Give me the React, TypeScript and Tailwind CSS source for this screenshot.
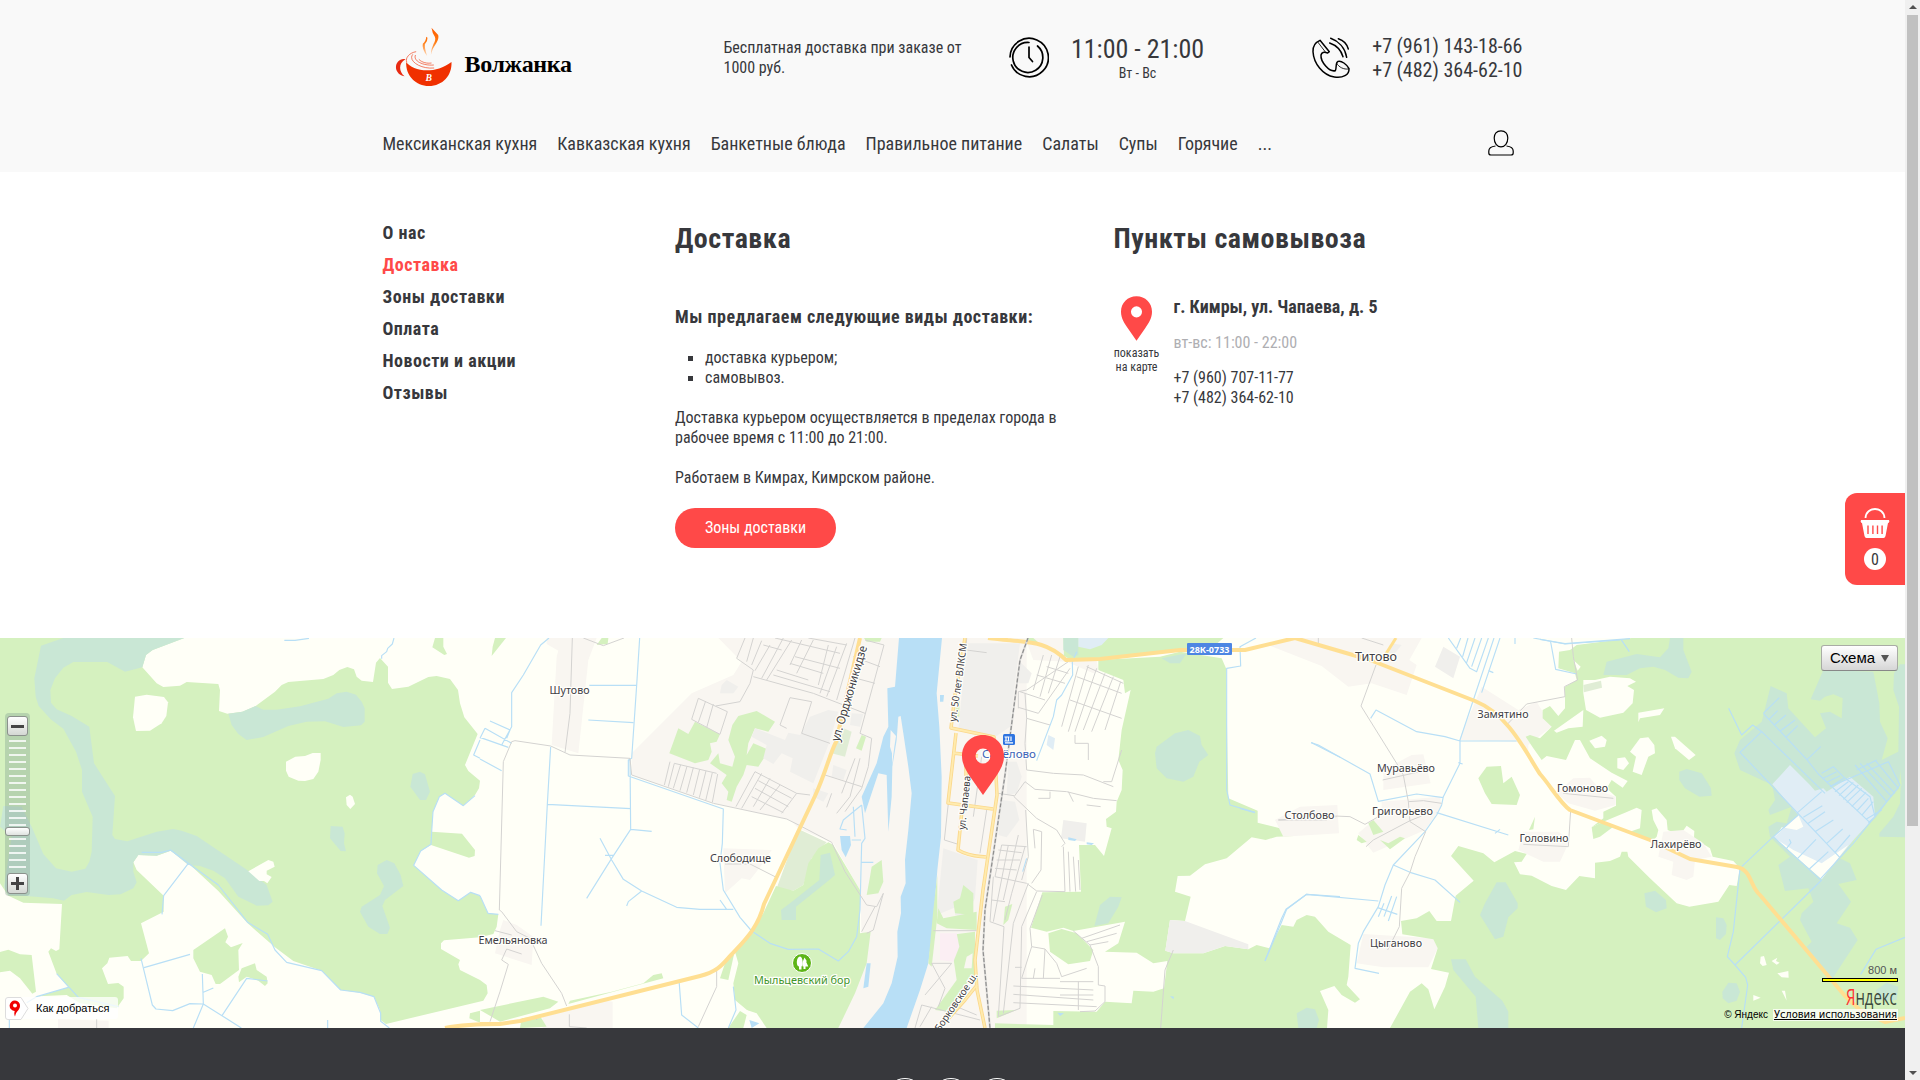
import React from 'react';

const GREEN = '#d5f1bf';
const FIELD = '#fffff7';
const SWAMP = '#c9e7d5';
const WATER = '#b8dff6';
const TOWN = '#f9f6f1';
const GREY = '#f0efec';
const PARK = '#e0edd5';
const PEAT = '#e0edf5';

type Shape = [string, string];
type Tile = { x: number; fills: Shape[]; streets?: string; canals?: string };

/* Map tiles: each has its own origin and is drawn at a third of its unit size. */
const tiles: Tile[] = [
  {
    x: 0,
    fills: [
      [GREEN, '0,24 553,24 458,60 438,75 427,112 470,160 490,171 540,167 560,156 655,162 660,180 657,243 682,251 727,245 767,228 825,185 845,165 865,156 970,147 1000,135 1018,120 1042,111 1062,118 1070,140 1085,152 1119,156 1128,98 1140,84 1164,110 1164,158 1176,177 1225,170 1285,141 1310,138 1350,147 1374,180 1380,220 1393,262 1433,312 1395,405 1405,423 1440,452 1437,475 1425,495 1390,527 1335,490 1318,500 1299,545 1295,605 1386,611 1425,660 1424,678 1407,683 1293,645 1262,663 1241,706 1325,780 1375,812 1412,787 1440,797 1464,850 1495,853 1490,890 1480,912 1440,922 1332,931 1323,940 1323,957 1380,990 1375,1003 1380,1020 1440,1050 1460,1065 1463,1090 1450,1112 1158,1182 1142,1170 1140,1140 1122,1100 1080,1088 1022,1080 965,1022 880,993 825,952 743,880 655,783 565,700 512,662 470,677 415,675 400,697 410,720 491,797 491,845 423,880 447,970 423,993 393,993 383,978 328,983 322,1000 306,1015 324,1062 355,1059 371,1070 371,1105 350,1135 240,1120 200,1095 115,1099 205,1072 170,1031 145,965 153,955 168,963 178,958 186,822 70,818 25,797 0,760'],
      [GREEN, '0,966 25,959 60,973 95,975 108,1085 97,1091 60,1045 30,1022 0,1027'],
      [GREEN, '580,960 675,895 684,920 676,937 693,952 728,939 715,960 717,1020 660,1062 647,1062 635,1035 600,1025 580,985'],
      [GREEN, '715,1040 725,1015 765,1000 770,1020 800,1040 803,1060 795,1068 775,1052 740,1040 717,1057'],
      [GREEN, '1305,24 1330,24 1330,50 1341,72 1333,75 1297,52'],
      [GREEN, '1410,1150 1440,1142 1440,1178 1408,1165'],
      [TOWN, '174,1168 326,1172 326,1194 174,1194'],
      [SWAMP, '190,24 553,24 458,60 438,75 427,112 375,125 322,96 220,96 190,113 165,145 151,180 153,218 170,238 215,258 268,290 282,400 345,498 337,615 345,627 382,634 470,605 520,597 545,602 590,618 745,722 800,765 818,815 805,826 770,827 715,800 675,745 640,722 600,708 565,705 512,662 470,677 415,675 400,697 400,725 410,757 400,775 362,793 325,795 260,786 215,795 192,812 160,805 80,798 25,795 12,770 35,620 0,590 10,528 65,530 95,590 130,672 168,715 215,725 256,716 268,695 275,665 278,560 246,485 246,420 228,365 190,296 152,268 116,228 107,200 103,145 123,47'],
      [SWAMP, '685,251 727,245 767,228 790,239 830,239 900,229 985,206 1010,190 1040,185 1068,194 1085,215 1094,235 1094,275 1083,286 1030,291 975,274 920,275 865,288 790,321 740,330 715,312 695,285'],
      [SWAMP, '1238,432 1260,425 1275,433 1290,485 1278,510 1260,510 1231,470'],
      [SWAMP, '992,588 1028,590 1034,610 1032,640 1038,664 1022,663 990,625'],
      [SWAMP, '1133,705 1160,690 1183,700 1202,735 1210,768 1155,810 1147,828 1170,893 1162,912 1140,912 1105,890 1080,845 1085,830 1140,795 1152,768 1131,730'],
      [FIELD, '405,200 440,194 492,201 504,217 499,258 485,280 450,302 408,303 399,262'],
      [FIELD, '858,395 886,380 915,378 938,369 962,369 962,390 955,425 940,447 915,453 895,452 866,440 858,422'],
      [FIELD, '1038,502 1050,494 1058,500 1065,522 1051,537 1040,525'],
      [FIELD, '745,724 805,690 820,695 824,710 800,722 800,733 815,741 802,760 792,753 778,753'],
    ],
    canals: 'M425,667H485L512,660 565,700 655,765 743,877 803,913 825,960 860,997 965,1022 1022,1080 1080,1087 1122,1100 1142,1150 1142,1174 1168,1194M565,700L491,797 486,853M423,985L457,1125 468,1137 518,1142 570,1121 610,1122 666,1157 740,1045 803,1053M432,1013L570,973M607,1032L610,1122 580,1194M610,1087L640,1074M666,1157L724,1194M170,1031L235,1102 355,1130M205,1072L110,1100 80,1118M853,31H885L927,25M1182,24L1177,42 1163,55 1160,65 1145,77V86M1440,330L1421,375 1440,385M1440,797L1412,787 1375,812 1325,780 1241,706 1262,663 1293,643 1295,605 1299,545 1318,500 1335,490 1390,527 1425,497M983,1170V1194M28,1170V1194',
    streets: 'M290,1168V1194',
  },
  {
    x: 480,
    fills: [
      [TOWN, '200,24 350,24 325,90 295,370 215,345 230,80 235,62 200,42'],
      [TOWN, '715,24 785,95 760,135 635,190 455,370 455,435 700,520 930,570 955,595 1060,640 1140,780 1145,915 1172,905 1075,1194 1640,1194 1640,24'],
      [TOWN, '730,655 875,660 845,705 810,750 785,745 735,790'],
      [TOWN, '70,870 110,885 160,920 155,1005 45,970 60,900'],
      [TOWN, '188,1160 370,1110 398,1115 398,1194 188,1194'],
      [GREEN, '45,24 78,24 35,78 38,50'],
      [GREEN, '365,24 385,24 383,42 350,45'],
      [GREEN, '595,295 625,312 645,275 720,313 710,335 690,340 695,365 685,390 645,400 568,370'],
      [GREEN, '757,285 775,258 830,243 885,275 865,305 825,295 805,340 800,375 820,340 868,360 835,410 800,405 790,435 770,470 755,515 740,510 745,485 725,460 740,435 690,400 715,370 720,400 757,410 765,380 745,330'],
      [GREY, '825,295 915,330 925,308 960,315 990,260 1045,240 1075,245 1045,345 1000,460 930,425 938,385 905,370 880,402 850,385 860,345 815,320'],
      [GREY, '740,150 775,170 760,190 720,190 725,165'],
      [GREY, '1115,250 1150,252 1140,290 1110,285'],
      [GREY, '1060,405 1100,420 1090,450 1055,440'],
      [GREY, '1000,475 1045,490 1030,515 1000,500'],
      [PARK, '1080,290 1115,305 1095,380 1055,370'],
      [PARK, '955,597 1040,637 995,685 970,765 940,782 890,775'],
      [GREEN, '1045,637 1060,645 1140,780 1140,910 1172,905 1160,1000 1125,1090 1075,1194 745,1194 780,1145 825,1160 765,1110 760,1060 775,1000 765,965 850,850 888,768 940,782 970,765 985,700 1015,655'],
      [FIELD, '745,1194 770,1130 830,1150 860,1194'],
      [GREEN, '745,1194 780,1143 800,1155 790,1194'],
      [GREEN, '735,1000 765,960 745,1050 720,1045'],
      [GREEN, '0,1140 190,1100 235,1115 210,1135 60,1175'],
      [GREEN, '125,1165 180,1158 200,1190 120,1194'],
      [GREEN, '395,1085 490,1060 520,1035 545,1030 550,1045 265,1122 270,1112'],
      [GREEN, '1175,710 1205,690 1210,755 1195,790 1160,795 1170,740'],
      [GREEN, '1145,315 1158,320 1145,362 1128,355'],
      [SWAMP, '1022,675 1050,668 1065,735 1045,752 948,830 948,870 905,870 903,840 930,820 1018,750'],
      [WATER, '1257,24 1386,24 1370,190 1378,290 1385,440 1383,620 1372,720 1358,900 1345,1000 1320,1080 1280,1194 1150,1194 1210,1120 1235,1060 1253,980 1252,905 1263,850 1262,800 1277,760 1275,690 1285,600 1295,490 1285,410 1270,310 1262,258 1255,260 1250,330 1237,410 1235,500 1225,605 1220,435 1195,430 1155,550 1145,500 1190,400 1210,320 1225,290 1222,175 1245,170'],
      [TOWN, '1232,300 1248,318 1243,350 1236,405 1236,370 1230,350'],
      [WATER, '1080,618 1110,618 1113,645 1097,682 1085,660'],
      [WATER, '1160,1000 1172,1000 1165,1070 1150,1075'],
      [WATER, '808,1170 838,1180 815,1194'],
    ],
    canals: 'M207,24L182,45 130,135 95,188V290L65,345M30,273L90,300 80,325M15,295L95,340M0,325L15,295M0,322L85,352M0,387L65,422M479,24L470,166 455,385 445,390V438L730,537 727,640 720,700 730,780 780,862 815,903 870,940 925,958 1015,957 1075,993 1105,965 1130,920 1140,840 1145,640 1155,625 1145,525M328,166H470M325,270L460,278M212,350L202,523 183,887M202,523L452,536M450,385L452,598 515,604M452,598L395,685 320,805M360,625L395,690 430,748 485,783 590,832 660,838H760M375,676H400M485,783L445,815 440,828M720,810L740,838M1145,525L1090,570 1080,597 1100,600M1120,530L1125,620M597,1050L605,1155 655,1194M760,1070L768,1140 745,1194M1115,630H1143M1143,697H1180M0,797L24,850 55,853',
    streets: 'M277,24L270,250 255,368M65,845L58,840 70,395 95,335 105,332 212,348 270,375 450,385 455,435 700,520 920,567 960,587 1055,637 1095,725 1160,825 1190,830 1210,790M65,845L110,905 150,925 185,1000 245,1090 260,1128M45,902L95,915M125,972L80,957 65,990 85,1003 60,1085 30,1175M268,1153V1190L320,1194M310,24L370,47 432,24M795,24L770,85 820,120 810,160 780,215 707,228M655,205L635,268 720,313 742,245ZM677,213L655,277M700,222L680,293M820,24L800,95M845,32L815,105M870,45L825,122M910,24L845,145M935,30L860,150M820,140L1000,190 1155,250M885,24L1080,70M850,45L905,60M945,80L1080,115M930,100L1030,130M890,120L985,150M880,135L1050,185M965,30L930,105M1000,30L950,130M1045,45L1015,165M1070,50L1020,190M1100,40L1040,200M1125,24L1070,210M985,24L1100,45M1155,30L1212,45 1140,310 1175,325 1165,410 1145,475 1095,545M1120,80L1200,110M1110,140L1185,160M930,203L900,285 920,295M930,203L995,215 965,310 1050,340M570,395L553,465M583,400L565,470M710,430L583,400M602,404L580,475M621,409L600,482M640,413L620,488M659,418L640,495M678,423L658,503M697,428L677,512M713,432L697,517M825,425L768,530M845,430L785,535M825,425L950,490 905,550M835,452L935,505M825,475L925,530M815,500L910,548M870,445L820,530M900,465L840,540M950,490L990,495M1035,435L1145,470M1140,385L1110,500 1070,550M1125,385L1085,490M1055,490L1040,532M1210,790L1180,900 1160,910M1185,830L1145,905M735,702H810L885,740M710,1015V1070L655,1190M170,1170V1160',
  },
  {
    x: 860,
    fills: [
      [FIELD, '1085,24 1440,24 1440,1194 900,1194 800,700'],
      [GREEN, '500,24 1090,24 1060,50 720,92 625,90 590,65 500,36'],
      [GREEN, '715,90 900,80 960,65 1085,85 1098,115 1105,505 1193,542 1193,578 1260,595 1280,580 1302,600 1302,618 1250,620 1217,630 1175,622 1100,685 1035,703 990,737 953,738 945,785 992,800 975,873 930,870 916,962 940,970 1030,970 1095,948 1165,958 1190,945 1228,955 1265,885 1300,890 1310,870 1340,855 1365,860 1405,905 1472,945 1465,1040 1460,1065 1500,1108 1485,1118 1445,1095 1423,1068 1380,1083 1405,1140 1401,1194 405,1194 405,1180 580,1185 580,1143 710,1145 735,1115 815,1120 820,1082 880,1085 912,1075 922,993 880,1000 830,968 735,965 775,940 795,875 640,903 610,893 560,905 513,893 547,787 663,785 657,645 705,645 732,678 755,595 740,590 738,567 768,545 770,515 785,480 788,420 775,390 785,300 812,180 795,190 790,150 715,120'],
      [GREY, '930,870 975,873 1165,943 1165,958 1095,948 1030,970 940,970 916,962'],
      [TOWN, '500,36 530,38 590,65 630,88 710,92 715,120 700,130 620,95 520,90'],
      [TOWN, '520,24 610,24 612,75 590,65 540,42'],
      [GREEN, '565,910 605,897 650,910 700,960 690,993 625,1003 570,965'],
      [GREY, '320,40 480,40 465,160 450,290 410,318 295,300'],
      [GREY, '480,95 515,130 505,160 475,160'],
      [GREY, '445,395 470,395 485,440 470,490 440,495'],
      [GREY, '425,510 465,515 478,570 440,622 415,615'],
      [GREY, '610,570 680,580 675,635 603,625'],
      [GREY, '250,655 353,690 345,805 315,865 285,855 290,830 230,855'],
      [GREEN, '310,765 340,790 340,855 285,850 280,815 300,805'],
      [GREEN, '235,835 250,865 350,845 350,900 260,895 230,880'],
      [GREEN, '270,915 345,905 345,1035 310,1070 270,1145 225,1140 290,1050'],
      [TOWN, '320,980 338,970 335,1015 312,1015'],
      ['#fbeef3', '240,910 290,910 298,950 280,995 240,990'],
      [GREEN, '435,830 457,822 445,870 430,885'],
      [GREEN, '12,24 65,24 60,35 20,35'],
      [GREEN, '290,200 299,205 298,260 285,260'],
      [GREEN, '410,1142 470,1140 410,1165'],
      [GREEN, '232,735 232,860 215,1010 205,1000 220,840'],
      [SWAMP, '885,370 890,350 945,310 985,300 1020,318 1025,345 1045,375 1018,395 1000,440 970,455 920,445 890,415'],
      [SWAMP, '703,888 720,825 750,800 785,802 775,830 745,880'],
      [SWAMP, '610,24 655,24 655,75 640,80 610,60'],
      [SWAMP, '1310,1150 1340,1133 1365,1138 1377,1170 1370,1194 1315,1194'],
      [SWAMP, '905,85 980,70 960,100 930,100'],
      [PEAT, '655,24 745,24 725,45 690,58 655,50'],
      [PEAT, '565,315 585,325 580,360 560,345'],
      [WATER, '240,195 252,195 250,215 240,215'],
      [WATER, '625,622 650,628 645,633 625,630'],
      [WATER, '680,637 702,640 695,645 680,643'],
      [WATER, '592,1148 612,1150 600,1158'],
      [WATER, '930,1098 942,1100 940,1108'],
    ],
    canals: 'M650,65L637,95 638,135 605,195 590,210 580,260 530,392M1188,24L1140,50 1142,108 1100,115 1100,480 1110,525 1185,547M1355,338L1440,382M1215,993L1265,875 1280,838 1340,793 1440,800M500,685L488,725',
    streets: 'M550,75L520,180M575,75L540,200M600,80L565,190M625,95L500,180 475,185V235M560,110L625,130M530,135L615,160M480,185L555,210M475,232L535,250 630,115M655,110L605,290M685,105L625,305M710,115L645,305M735,130L670,300M760,140L695,305M782,155L735,300M680,110L790,160M650,140L785,190M630,210L785,265M495,190L500,265 495,340 500,420 580,430 670,435 760,470M500,265L570,285M645,315L645,340H685V390M785,360L755,455 730,455M495,455L525,478 620,485 700,505 770,512M495,455L462,500 530,565 590,600 615,640M462,497L415,490M570,485V505H535M625,485L640,515M680,525L722,530M497,540L505,680 485,750M520,598L545,605 543,720 515,760M520,598L525,655M610,650L615,785M625,665L630,785M640,680L647,785M655,690L660,780M615,785L530,783 500,760 405,740 425,645 500,650M415,660L485,668M410,690H480M405,715L470,720M475,615L430,810M445,645L400,875M495,650L455,790 435,870M400,740L390,875 432,890 415,1160M395,810L435,815M505,760L460,880 430,1150M530,785L485,890 480,1135 415,1160M547,795L510,895 515,950 485,1045H600M515,950L555,957 550,1045M555,957L590,1000 605,1040 680,1015M525,1015L520,1045M465,1012H485M460,1068L700,1080M600,1055H700M600,1095H700M460,1093L700,1110M460,1118L710,1130M655,1055V1140M665,925L780,885M680,935L770,910M690,945L745,935M640,903L690,945 715,1010V1065L735,1068V1115L705,1143 660,1145M940,960L915,1020 902,1194M265,520L253,630 295,643M365,380L340,560M380,540L360,670M320,24L318,60 380,68M220,902H350M215,1000H275L195,1095M215,1000L255,1075 235,1130M185,1125L360,1170M215,1130L180,1190M290,1130L350,1155M185,1125L165,1194M615,640L605,650M1255,570H1400',
  },
  {
    x: 1240,
    fills: [
      [TOWN, '85,45 150,24 545,24 508,90 530,105 500,195 395,160 325,170 245,108'],
      [GREY, '455,40 485,45 460,75 440,65'],
      [GREY, '610,50 660,80 640,145 585,110'],
      [TOWN, '660,330 665,310 725,170 835,240 890,215 935,290 890,325 865,345 865,365 830,335'],
      [TOWN, '430,420 515,375 550,373 572,460 430,480'],
      [TOWN, '355,610 425,550 425,515 600,500 605,530 555,600 400,668'],
      [TOWN, '105,570 180,530 292,525 297,610 130,620'],
      [TOWN, '835,660 850,605 955,605 990,630 960,695 910,695'],
      [TOWN, '950,490 1000,445 1050,443 1085,485 1127,500 1127,525 1065,542 985,520'],
      [TOWN, '350,1000 370,912 580,925 593,955 565,1012 430,1012'],
      [GREEN, '715,445 740,410 783,408 790,460 815,440 840,495 830,525 755,522 735,490'],
      [GREEN, '885,560 880,598 867,600'],
      [GREEN, '400,570 430,605 400,615 385,580'],
      [GREEN, '355,615 380,635 365,640 350,630'],
      [GREEN, '420,630 445,640 480,620 495,625 450,658'],
    ],
    canals: 'M625,24L690,115 710,125 745,24M650,55L662,24M668,80L684,24M680,98L705,24M695,110L725,24M762,24L705,195 660,330V400L610,500 605,525 590,555 555,605 460,705 435,765 415,830 370,905 355,940 345,1015 417,1030M780,24L725,188M392,265L408,240 530,305 615,320 660,333H830M213,338L235,345 390,432 415,514 530,492 610,503M590,548L805,615M765,610L780,598M460,705L510,727 585,750 660,817M415,813L200,793 138,838 125,865 75,992M413,833L472,853M415,860L432,820M432,860L455,798M445,873L470,800M745,122L760,128M655,398L668,402M825,24V42M880,24L975,42 1140,30M932,36L947,118 1010,132M0,535L45,548',
    streets: 'M408,105L363,228 470,400 490,435 505,515 510,575 557,605 525,680 510,727 485,775 478,890 443,960M365,24L430,45M235,40V24M428,450L540,425M505,515L550,512 605,520M285,558L330,560 375,583 415,560M378,650L400,630 510,572 545,558M995,24L1000,80 1013,150 973,170 975,200 860,222 800,285M970,490L1120,505M992,540L985,650 850,643M115,570L290,560',
  },
  {
    x: 1540,
    fills: [
      [GREEN, '-450,1194 -390,1085 -355,1060 -335,1078 -317,1138 -285,1070 -273,1028 -327,1017 -307,955 -320,928 -413,913 -417,873 -370,865 -332,843 -310,873 -267,873 -253,797 -199,752 -267,678 -245,648 -170,670 -137,697 -75,663 -40,672 -55,695 -78,697 -60,733 -25,737 35,768 78,780 118,738 165,745 165,698 210,693 240,680 245,665 262,665 265,680 330,745 410,820 448,830 535,815 568,765 590,768 600,715 580,693 518,680 510,655 462,625 463,603 440,587 420,615 383,600 380,570 350,535 335,540 340,570 355,600 350,620 335,635 265,607 300,595 305,540 290,533 255,548 190,575 155,592 190,565 190,545 228,527 228,500 200,475 215,450 248,473 263,453 215,428 150,385 120,330 105,330 78,390 20,378 5,390 -20,355 -43,320 -30,315 0,325 35,290 8,265 8,240 30,228 55,258 75,235 75,170 110,150 105,130 55,115 57,65 90,60 110,45 275,24 1095,24 1095,1194'],
      [GREEN, '155,592 190,575 220,590 180,620 160,627'],
      [FIELD, '130,150 165,150 210,140 270,145 288,155 262,168 282,180 278,220 250,248 180,263 138,240 130,190'],
      [PARK, '130,165 183,152 186,173 132,187'],
      [FIELD, '295,248 373,235 360,255 300,265 295,277'],
      [FIELD, '42,302 130,240 128,290 85,295 50,308'],
      [FIELD, '148,332 185,317 200,330 195,350 165,355'],
      [FIELD, '270,365 300,325 325,322 343,345 345,370 325,380 305,435 278,425 288,380'],
      [FIELD, '232,385 255,382 267,400 250,420 232,415'],
      [FIELD, '393,320 405,320 467,375 447,390 405,355'],
      [FIELD, '662,980 672,978 680,1005 668,1008 660,1000'],
      [FIELD, '695,993 712,983 708,993 719,998 710,1004'],
      [FIELD, '712,1030 745,1023 746,1043 725,1042'],
      [FIELD, '640,1095 662,1103 640,1112'],
      [FIELD, '725,1082 735,1082 740,1112'],
      [FIELD, '100,90 122,110 113,122'],
      [TOWN, '355,680 370,605 430,600 490,640 515,680 465,690 460,740 440,750 395,735 400,695'],
      [SWAMP, '190,135 200,95 290,72 360,82 385,55 390,24 430,24 430,60 455,125 445,145 415,143 375,120 340,110 300,115 260,135'],
      [SWAMP, '-180,855 -165,820 -130,757 -103,757 -67,820 -67,835 -95,862 -110,920 -135,928'],
      [SWAMP, '-267,988 -223,988 -195,1040 -113,1112 -95,1145 -95,1194 -185,1194 -193,1100 -260,1020'],
      [SWAMP, '418,425 440,417 485,430 513,475 515,497 478,500 435,475 418,450'],
      [SWAMP, '313,790 345,782 378,810 380,835 348,847 318,830'],
      [SWAMP, '528,862 550,865 560,885 558,912 540,930 528,925'],
      [SWAMP, '547,1085 565,1058 590,1060 600,1085 590,1112 565,1120 548,1105'],
      [SWAMP, '692,168 740,190 745,235 825,322 858,295 840,250 870,245 905,265 908,205 880,193 855,200 840,212 812,208 850,120 1000,125 1018,220 1020,275 1043,325 1025,390 1085,360 1075,500 1060,560 1000,570 900,685 930,700 950,750 895,762 933,815 890,880 930,893 953,930 878,1045 850,1030 800,950 815,935 780,870 785,850 820,815 805,775 735,783 715,705 750,680 690,620 685,590 710,575 740,580 755,530 690,555 685,540 705,510 697,465 600,420 583,370 600,330 665,275'],
      [SWAMP, '1095,103 1080,103 1062,130 1060,180 1077,230 1075,370 1085,465 1018,600 1018,620 1095,622'],
      [GREEN, '1043,515 1082,470 1080,520 1060,560 1018,610 950,640 915,680 905,684 945,625 1010,560'],
      [SWAMP, '1008,1080 1040,1058 1075,1070 1070,1110 1010,1112'],
      [PEAT, '750,405 810,465 825,482 850,475 860,485 930,440 1000,500 1005,560 945,625 845,745 700,620 775,555 697,463'],
      [FIELD, '705,620 775,555 790,590 770,600 725,592'],
      [FIELD, '705,625 760,660 845,700 925,645 845,748'],
    ],
    canals: 'M566,235L605,315 638,285 665,305 600,367 900,683 940,640M665,305L855,490M670,250L800,388 835,432 990,578M670,250L718,203M687,268L713,242M703,285L738,255M720,304L765,270M737,322L773,287M802,388L842,350M770,550L845,485M775,555L700,620 605,710M700,620L840,748 900,683M740,655L753,638 748,628M773,685L828,628M808,717L865,665M885,667L930,615M860,640L908,597M825,605L880,570M805,580L855,545M790,562L847,527M845,430L880,410 910,440 990,500 1005,560 985,578M850,445L890,425M860,457L900,437M870,470L912,445M885,485L925,455M897,497L940,457M910,508L955,465M920,518L965,475M935,530L978,487M950,543L985,505M965,556L1000,515M978,568L1025,540M945,405L1040,515 1080,465 1045,395 870,470M960,400L1055,500M980,400L1065,490M1005,390L1075,475M950,420L1010,390M940,640L1040,515M845,750L585,1005M600,715L580,905 562,980 585,1005 617,1042 623,1065 605,1194M1095,922L1008,958 962,1033M243,28L268,65M0,28L75,41 270,26',
  },
];

const roads = [
  'M480,1024H500L520,1021 700,976C720,971 724,962 732,954C745,940 758,928 764,904L815,796C826,772 830,753 836,742L860,638',
  'M988,638C1030,643 1045,640 1066,660L1100,659 1180,650 1245,650 1295,638 1370,660 1475,701C1510,715 1527,755 1540,774C1550,785 1560,803 1570,810L1650,840 1690,859 1737,867C1752,870 1750,887 1760,895L1845,996 1860,1010 1885,1022 1905,1018',
];
const avenues = [
  'M965,638L955,695 951,728 994,737 997,795 983,890 975,960 977,990 985,1028',
  'M956,733L948,803 993,809M953,753L978,756M966,760V780M962,810L958,850C970,857 978,856 986,857M977,985L965,1000 940,1028',
];

type Place = { t: string; x: number; y: number; s?: number; c?: string; r?: number; a?: 'start' | 'middle'; w?: number };
const places: Place[] = [
  { t: 'Шутово', x: 569.5, y: 694, w: 40 },
  { t: 'Слободище', x: 740.5, y: 862, w: 61 },
  { t: 'Емельяновка', x: 513, y: 944, w: 69 },
  { t: 'Мыльцевский бор', x: 802, y: 984, w: 96, c: '#41952a' },
  { t: 'Савёлово', x: 982, y: 758, w: 54, c: '#3c63b8', a: 'start' },
  { t: 'Титово', x: 1376, y: 661, w: 42, s: 13 },
  { t: 'Замятино', x: 1503, y: 718, w: 51 },
  { t: 'Муравьёво', x: 1406, y: 772, w: 58 },
  { t: 'Григорьево', x: 1402.5, y: 815, w: 61 },
  { t: 'Столбово', x: 1309.5, y: 819, w: 50 },
  { t: 'Гомоново', x: 1582.5, y: 792, w: 51 },
  { t: 'Головино', x: 1544, y: 842, w: 49 },
  { t: 'Лахирёво', x: 1676, y: 848, w: 51 },
  { t: 'Цыганово', x: 1396, y: 947, w: 52 },
  { t: 'ул. Орджоникидзе', x: 839, y: 742, w: 99, r: -73.5, s: 12, a: 'start' },
  { t: 'ул. 50 лет ВЛКСМ', x: 956, y: 722, w: 79, r: -82, s: 10, a: 'start' },
  { t: 'ул. Чапаева', x: 965, y: 830, w: 54, r: -84, s: 10, a: 'start' },
  { t: 'Борковское ш.', x: 940, y: 1032, w: 68, r: -56, s: 10, a: 'start' },
];

function Pin({ className }: { className: string }) {
  return (
    <svg viewBox="0 0 42 60" className={className}>
      <path fill="#ff4948" fillRule="evenodd" d="M21 0C9 0 0 9 0 21C0 30 5 37 9 43L21 60L33 43C37 37 42 30 42 21C42 9 33 0 21 0ZM21 13.500a7.500 7.500 0 1 1 0 15a7.500 7.500 0 0 1 0-15Z" />
    </svg>
  );
}

function MapCanvas() {
  return (
    <svg viewBox="0 638 1905 390" className="block h-[390px] w-[1905px]">
      <rect x="0" y="638" width="1905" height="390" fill={FIELD} />
      {tiles.map((t) => (
        <g key={t.x} transform={`translate(${t.x},630) scale(0.33333)`}>
          {t.fills.map(([c, p], i) => (
            <polygon key={i} points={p} fill={c} />
          ))}
        </g>
      ))}
      {tiles.map((t) => (
        <g key={t.x} transform={`translate(${t.x},630) scale(0.33333)`} fill="none" strokeLinejoin="round">
          <path d={t.canals} stroke="#b8dff6" strokeWidth="3.500" />
          <path d={t.streets} stroke="#d4d3d1" strokeWidth="3" />
        </g>
      ))}
      <g fill="none" strokeLinejoin="round">
        {avenues.map((d) => (
          <path key={d} d={d} stroke="#fbd88c" strokeWidth="3.500" />
        ))}
        {avenues.map((d) => (
          <path key={d} d={d} stroke="#ffebae" strokeWidth="1.800" />
        ))}
        <path d="M1382,660L1396,638" stroke="#ffe08f" strokeWidth="3" />
        {roads.map((d) => (
          <path key={d} d={d} stroke="#ffdf92" strokeWidth="4" />
        ))}
        <path d="M445,1028Q465,1024 500,1024" stroke="#ffdf92" strokeWidth="4" />
        <path d="M1028,638L1020,660 1005,775 985,910 983,950 990,1028" stroke="#d9d8d6" strokeWidth="2" />
        <path d="M1028,638L1020,660 1005,775 985,910 983,950 990,1028" stroke="#8f8f8f" strokeWidth="1.200" strokeDasharray="4 2" />
      </g>
      <circle cx="802" cy="963" r="9.500" fill="#5eb517" stroke="#fff" />
      <path fill="#fff" d="M800 956.500C796.500 956.500 795.500 966 799 966.500V969.500H801.500V966.500C803.500 966 803 956.500 800 956.500ZM804.500 957.500L807 961.500H806L808.300 966.500H805.500V969H803.500V966.500H802.500L803 961Z" />
      <rect x="1187" y="643" width="45" height="12" rx="1" fill="#4d86e3" />
      <text x="1209.500" y="652.500" textAnchor="middle" fill="#fff" fontFamily="Noto Sans" fontSize="9.500" fontWeight="700" textLength="40" lengthAdjust="spacingAndGlyphs">28К-0733</text>
      <rect x="1003" y="734" width="12" height="11" rx="1.500" fill="#2f74e0" />
      <path stroke="#fff" strokeWidth="1.200" fill="none" d="M1004.500 737h5M1004.500 741h5M1006 737v4M1008.500 737v4M1011 736.500v4.500M1005 742.800h8" />
      <g fontFamily="Noto Sans" stroke="#fffffb" strokeWidth="2.500" strokeLinejoin="round">
        {places.map((p) => (
          <text
            key={p.t}
            x={p.x}
            y={p.y}
            fontSize={p.s ?? 11}
            fill={p.c ?? '#3f4045'}
            textAnchor={p.a ?? 'middle'}
            textLength={p.w}
            lengthAdjust="spacingAndGlyphs"
            transform={p.r ? `rotate(${p.r} ${p.x} ${p.y})` : undefined}
            className="[paint-order:stroke]"
          >
            {p.t}
          </text>
        ))}
      </g>
    </svg>
  );
}

function Logo() {
  return (
    <svg viewBox="28.500 18 174 186" className="h-[62px] w-[58px]">
      <defs>
        <linearGradient id="steam" x1="0" y1="0" x2="0" y2="1">
          <stop offset="0" stopColor="#ff5a00" />
          <stop offset=".5" stopColor="#ff7a10" />
          <stop offset="1" stopColor="#ffd9b8" />
        </linearGradient>
      </defs>
      <path fill="url(#steam)" d="M138 23L158 45Q161 55 153 68Q140 85 136 105Q137 85 144 72Q152 58 148 50Q140 38 138 23ZM122 50L126 53Q127 62 118 73Q117 86 125 108Q108 86 112 71Q122 62 122 50Z" />
      <path fill="#f03000" d="M62 126C80 152 145 166 198 126C200 166 172 198 130 198C92 198 60 168 62 126Z" />
      <path fill="#e82a12" d="M60 118C38 112 20 142 40 161C46 166 52 168 57 169C40 155 38 130 60 118Z" />
      <path fill="none" stroke="#f0502c" strokeWidth="2.200" d="M92 95C72 98 58 114 64 127M82 103C66 122 105 148 146 144M90 105C82 122 112 138 145 135M100 118C110 128 125 131 138 129" />
      <text x="130" y="182" textAnchor="middle" fontFamily="Liberation Serif" fontStyle="italic" fontWeight="700" fontSize="29" fill="#fff">В</text>
    </svg>
  );
}

const nav = ['Мексиканская кухня', 'Кавказская кухня', 'Банкетные блюда', 'Правильное питание', 'Салаты', 'Супы', 'Горячие', '...'];
const side = ['О нас', 'Доставка', 'Зоны доставки', 'Оплата', 'Новости и акции', 'Отзывы'];

function Header() {
  return (
    <header className="h-[172px] bg-[#f9f9f9]">
      <div className="mx-auto w-[1140px]">
        <div className="flex h-[122px] items-start">
          <div className="flex w-[341px] pt-[26px] pl-[12px]">
            <Logo />
            <span className="ml-[12px] pt-[23px] font-['Liberation_Serif',serif] text-[24px] leading-[30px] font-bold tracking-[-0.350px] text-black">Волжанка</span>
          </div>
          <p className="w-[285px] pt-[38px] pr-6 text-[16px] leading-5">Бесплатная доставка при заказе от 1000 руб.</p>
          <svg viewBox="0 0 40 41" className="mt-[37px] h-[41px] w-[40px]" fill="none" stroke="#000" strokeWidth="1.700" strokeLinecap="round">
            <path d="M1 20A19.200 19.200 0 1 1 2.500 28" />
            <path d="M20 5.500A15 15 0 1 0 28.500 9" />
            <path d="M20 10V20.500L23.500 24.500" />
          </svg>
          <div className="w-[178px] pt-[32px] text-center">
            <div className="text-[26px] leading-[34px]">11:00 - 21:00</div>
            <div className="text-[14px] leading-[14px]">Вт - Вс</div>
          </div>
          <svg viewBox="930 36 120 126" className="mt-[37px] ml-[84px] h-[42px] w-[40px]" fill="none" stroke="#000" strokeWidth="4.500" strokeLinejoin="round" strokeLinecap="round">
            <path d="M957 46C943 52 935 62 936 80C938 115 965 150 1000 156C1025 160 1045 150 1044 131C1038 118 1020 106 1012 109C1002 112 1008 128 1003 137C985 142 958 110 960 90C962 82 968 80 980 84L985 80ZM989 40C1012 48 1032 68 1037 97M986 54C1006 61 1020 75 1026 95M1012 41C1028 46 1038 57 1042 72" />
            <path strokeWidth="2.500" d="M951 52L974 82M1007 115C1014 127 1028 134 1042 132" />
          </svg>
          <div className="ml-auto pt-[34px] text-right text-[20px] leading-6">
            <div>+7 (961) 143-18-66</div>
            <div>+7 (482) 364-62-10</div>
          </div>
        </div>
        <div className="flex items-start justify-between">
          <nav className="flex gap-[20px] text-[18px] leading-[44px]">
            {nav.map((n) => (
              <a key={n}>{n}</a>
            ))}
          </nav>
          <svg viewBox="0 0 26 26" className="mt-[8px] mr-[9px] h-[26px] w-[26px]" fill="none" stroke="#000" strokeWidth="1.200">
            <path d="M13 .8C8.500 .8 6.200 4 6.200 8C6.200 13 9 16.800 13 16.800S19.800 13 19.800 8C19.800 4 17.500 .8 13 .8ZM7.500 16C3 16.500 .8 18 .8 21V23Q.8 25 3 25H23Q25.200 25 25.200 23V21C25.200 18 23 16.500 18.500 16" />
          </svg>
        </div>
      </div>
    </header>
  );
}

function Content() {
  return (
    <main className="mx-auto flex h-[466px] w-[1140px] pt-[45px]">
      <ul className="w-[292.500px] text-[18px] leading-8 font-bold tracking-[0.500px]">
        {side.map((s) => (
          <li key={s} className={s === 'Доставка' ? 'text-[#ff4948]' : ''}>{s}</li>
        ))}
      </ul>
      <section className="w-[438.500px]">
        <h1 className="text-[28px] leading-[44px] font-bold tracking-[0.500px]">Доставка</h1>
        <h2 className="mt-[44px] text-[18px] leading-6 font-bold tracking-[0.500px]">Мы предлагаем следующие виды доставки:</h2>
        <ul className="mt-[19px] text-[16px] leading-5">
          {['доставка курьером;', 'самовывоз.'].map((s) => (
            <li key={s} className="flex items-center pl-[13px]"><span className="mr-[12px] h-[5px] w-[5px] bg-[#37383c]" />{s}</li>
          ))}
        </ul>
        <p className="mt-[20px] w-[390px] text-[16px] leading-5">Доставка курьером осуществляется в пределах города в рабочее время с 11:00 до 21:00.</p>
        <p className="mt-[20px] text-[16px] leading-5">Работаем в Кимрах, Кимрском районе.</p>
        <button className="mt-[20px] h-[40px] w-[161px] rounded-full bg-[#ff4948] text-[16px] text-white">Зоны доставки</button>
      </section>
      <section>
        <h1 className="text-[28px] leading-[44px] font-bold tracking-[0.500px]">Пункты самовывоза</h1>
        <div className="mt-[34px] flex">
          <div className="flex w-[46px] flex-col items-center pt-px text-center text-[12px] leading-[14px]">
            <Pin className="mb-[5px] h-[45px] w-[31px]" />
            <div>показать</div>
            <div>на карте</div>
          </div>
          <div className="ml-[14px] text-[16px] leading-5">
            <div className="text-[18px] leading-6 font-bold">г. Кимры, ул. Чапаева, д. 5</div>
            <div className="mt-[14px] text-[#aeaeb2]">вт-вс: 11:00 - 22:00</div>
            <div className="mt-[15px]">+7 (960) 707-11-77</div>
            <div>+7 (482) 364-62-10</div>
          </div>
        </div>
      </section>
    </main>
  );
}

function MapSection() {
  return (
    <section className="relative h-[390px] overflow-hidden font-['Liberation_Sans',sans-serif] [font-stretch:100%]">
      <MapCanvas />
      <Pin className="absolute top-[97px] left-[962px] h-[60px] w-[42px]" />
      <div className="absolute top-[75px] left-[5px] flex h-[183px] w-[25px] flex-col items-center rounded bg-[#7d9b8f]/35 pt-[3px]">
        <div className="flex h-[20px] w-[21px] shrink-0 items-center justify-center rounded-[3px] border border-[#8b918c] bg-linear-to-b from-white to-[#d4d8d3]">
          <span className="h-[3px] w-[13px] bg-[#444]" />
        </div>
        <div className="mt-[4px] flex flex-col gap-[5px]">
          {Array.from({ length: 19 }, (_, i) => (
            <span key={i} className="h-[2px] w-[17px] bg-white/80" />
          ))}
        </div>
        <div className="absolute top-[114px] left-0 h-[9px] w-[25px] rounded-[3px] border border-[#8b918c] bg-linear-to-b from-white to-[#dfe3e0]" />
        <div className="absolute top-[160px] left-[2px] flex h-[21px] w-[21px] items-center justify-center rounded-[3px] border border-[#8b918c] bg-linear-to-b from-white to-[#d4d8d3]">
          <svg viewBox="0 0 13 13" className="h-[13px] w-[13px]"><path d="M0 5h5V0h3v5h5v3H8v5H5V8H0Z" fill="#444" /></svg>
        </div>
      </div>
      <div className="absolute top-[359px] left-[5px] flex h-[22px] w-[113px] items-center rounded-[3px] bg-white/75">
        <svg viewBox="0 0 24 23" className="h-[23px] w-[24px]">
          <path d="M3 .5H16L23 11.500 16 22.500H3Q.5 22.500 .5 20V3Q.5 .5 3 .5Z" fill="#fff" stroke="#ddd" />
          <path d="M10 3.500a5 5 0 0 1 5 5.500c0 4-4 5-5 10.500c-1-2-.8-4-.3-5.500a5 5 0 0 1 .3-10.500Z" fill="#f00000" />
          <circle cx="10" cy="8.500" r="2" fill="#fff" />
        </svg>
        <span className="ml-[7px] text-[11px] text-black">Как добраться</span>
      </div>
      <div className="absolute top-[7px] right-[7px] flex h-[26px] w-[77px] items-center justify-center gap-[6px] rounded-[3px] border border-[#a9aca5] border-b-[#888] bg-linear-to-b from-white to-[#d6d6d6] text-[15px] text-black">
        Схема
        <span className="border-x-[4px] border-t-[7px] border-x-transparent border-t-[#555]" />
      </div>
      <div className="absolute right-[7px] bottom-[7px] flex flex-col items-end">
        <div className="mr-px text-[11px] leading-[13px] text-[#555]">800 м</div>
        <div className="mt-px h-[4px] w-[76px] border border-black bg-[#ff0]" />
        <div className="mt-px mr-px h-[26px] origin-right scale-x-[0.68] font-['Open_Sans',sans-serif] text-[22px] leading-[26px] text-[#3c4a3c]"><span className="text-[#f33]">Я</span>ндекс</div>
        <div className="flex items-center text-[10px] leading-[12px] text-black">
          <span className="mr-[5px]">© Яндекс</span>
          <span className="bg-white/75 px-px font-['DejaVu_Sans',sans-serif] text-[10px] tracking-[-0.100px] underline">Условия использования</span>
        </div>
      </div>
    </section>
  );
}

export default function App() {
  return (
    <div className="flex h-[1080px] w-[1920px] overflow-hidden bg-white font-['Roboto_Condensed','Roboto',sans-serif] text-[#37383c] [font-stretch:75%]">
      <div className="relative w-[1905px] overflow-hidden">
        <Header />
        <Content />
        <MapSection />
        <footer className="flex h-[52px] items-start justify-center gap-[6px] overflow-hidden bg-[#37383c] pt-[50px] pr-[3px]">
          {[0, 1, 2].map((i) => (
            <span key={i} className="h-[40px] w-[40px] shrink-0 rounded-full border border-white" />
          ))}
        </footer>
        <aside className="absolute top-[493px] right-0 flex h-[92px] w-[60px] flex-col items-center rounded-l-[12px] bg-[#ff4948] pt-[15px]">
          <svg viewBox="0 0 30 30" className="h-[30px] w-[30px]">
            <path d="M5.500 10C6 -2 24 -2 24.500 10" fill="none" stroke="#fff" strokeWidth="1.800" />
            <path fill="#fff" fillRule="evenodd" d="M1 12H29Q30 13.500 28.500 15H28L25.500 28Q25 30 23.500 30H6.500Q5 30 4.500 28L2 15H1.500Q0 13.500 1 12ZM7.300 17.500V26H8.700V17.500ZM12.200 17.500V26H13.600V17.500ZM16.800 17.500V26H18.200V17.500ZM21.400 17.500V26H22.800V17.500Z" />
          </svg>
          <span className="mt-[10px] flex h-[22px] w-[22px] items-center justify-center rounded-full bg-white pt-px text-[16px]">0</span>
        </aside>
      </div>
      <div className="flex w-[15px] flex-col items-center justify-between bg-[#f0f0f0] py-[5px]">
        <span className="border-x-[4px] border-b-[4px] border-x-transparent border-b-[#505050]" />
        <div className="mb-auto mt-[6px] h-[811px] w-[11px] bg-[#c1c1c1]" />
        <span className="border-x-[4px] border-t-[4px] border-x-transparent border-t-[#505050]" />
      </div>
    </div>
  );
}
